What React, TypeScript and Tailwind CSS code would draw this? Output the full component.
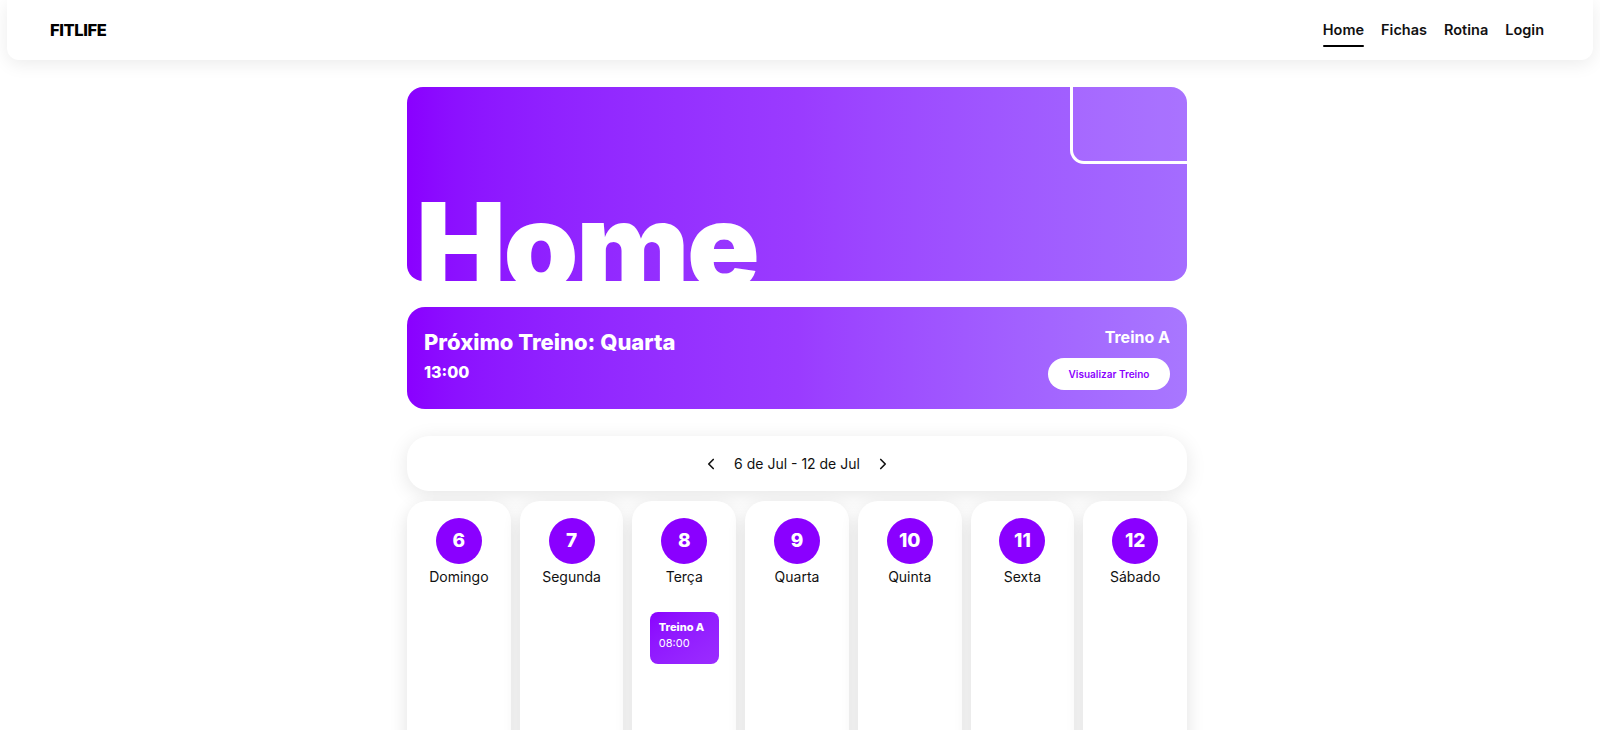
import { ChevronLeft, ChevronRight } from "lucide-react";

interface Day {
  num: number;
  name: string;
  treino?: { title: string; time: string };
}

const days: Day[] = [
  { num: 6, name: "Domingo" },
  { num: 7, name: "Segunda" },
  { num: 8, name: "Terça", treino: { title: "Treino A", time: "08:00" } },
  { num: 9, name: "Quarta" },
  { num: 10, name: "Quinta" },
  { num: 11, name: "Sexta" },
  { num: 12, name: "Sábado" },
];

const links = ["Home", "Fichas", "Rotina", "Login"];

function Navbar() {
  return (
    <nav className="mx-[7px] h-[60px] bg-white rounded-b-xl shadow-[0_4px_18px_rgba(0,0,0,0.08)] flex items-center justify-between pl-[43px] pr-[49px]">
      <span className="text-[16.5px] font-extrabold tracking-tight text-black">FITLIFE</span>
      <ul className="flex gap-[17px] text-[14.5px] font-semibold text-[#111]">
        {links.map((l) => (
          <li key={l} className="relative">
            {l}
            {l === "Home" && (
              <span className="absolute left-0 right-0 -bottom-[6px] h-[2px] bg-black rounded" />
            )}
          </li>
        ))}
      </ul>
    </nav>
  );
}

function DayColumn({ day }: { day: Day }) {
  return (
    <div className="bg-white rounded-t-[20px] min-h-[260px] shadow-[0_6px_18px_rgba(0,0,0,0.12)] flex flex-col items-center pt-[17px]">
      <div className="w-[46px] h-[46px] rounded-full bg-[#8a00ff] text-white font-extrabold text-[19px] flex items-center justify-center">
        {day.num}
      </div>
      <span className="text-[14px] text-[#111] mt-[2px]">{day.name}</span>
      {day.treino && (
        <div className="mt-[25px] w-[69px] h-[52px] rounded-[8px] bg-gradient-to-br from-[#8a00ff] to-[#9b2cff] text-white px-[9px] pt-[8px]">
          <p className="text-[11px] font-extrabold leading-[14px]">{day.treino.title}</p>
          <p className="text-[11px] leading-[18px]">{day.treino.time}</p>
        </div>
      )}
    </div>
  );
}

export default function App() {
  return (
    <div className="min-h-screen bg-white overflow-hidden" style={{ fontFamily: "Inter, 'Open Sans', sans-serif" }}>
      <Navbar />
      <div className="flex justify-center pr-[6px]">
        <main className="w-[780px] pt-[27px] flex flex-col">
          <section className="relative h-[194px] rounded-[16px] overflow-hidden bg-gradient-to-r from-[#8a00ff] via-[#9a3bff] to-[#a46cff] pt-[99px] pl-[9px]">
            <div className="absolute top-0 right-0 w-[117px] h-[77px] border-l-[3px] border-b-[3px] border-white rounded-bl-[14px] bg-white/5" />
            <h1 className="text-[120px] leading-none font-black text-white tracking-[-0.02em]">Home</h1>
          </section>

          <section className="mt-[26px] h-[102px] rounded-[18px] bg-gradient-to-r from-[#8a00ff] via-[#9a3bff] to-[#a877ff] px-[17px] flex items-center justify-between text-white">
            <div className="flex flex-col -mt-[5px]">
              <h2 className="text-[22px] font-extrabold leading-[30px] mb-[3px]">Próximo Treino: Quarta</h2>
              <span className="text-[16px] font-extrabold">13:00</span>
            </div>
            <div className="flex flex-col items-end">
              <span className="text-[16px] font-bold leading-[22px]">Treino A</span>
              <button className="mt-[10px] h-[32px] w-[122px] rounded-full bg-white text-[#8a00ff] text-[10px] font-semibold">
                Visualizar Treino
              </button>
            </div>
          </section>

          <section className="mt-[27px] h-[55px] rounded-[22px] bg-white shadow-[0_4px_20px_rgba(0,0,0,0.1)] flex items-center justify-center gap-[10px] text-[#111]">
            <ChevronLeft size={18} strokeWidth={2.2} />
            <span className="text-[14px] px-[4px]">6 de Jul - 12 de Jul</span>
            <ChevronRight size={18} strokeWidth={2.2} />
          </section>

          <section className="mt-[10px] grid grid-cols-7 gap-[9px]">
            {days.map((d) => (
              <DayColumn key={d.num} day={d} />
            ))}
          </section>
        </main>
      </div>
    </div>
  );
}
